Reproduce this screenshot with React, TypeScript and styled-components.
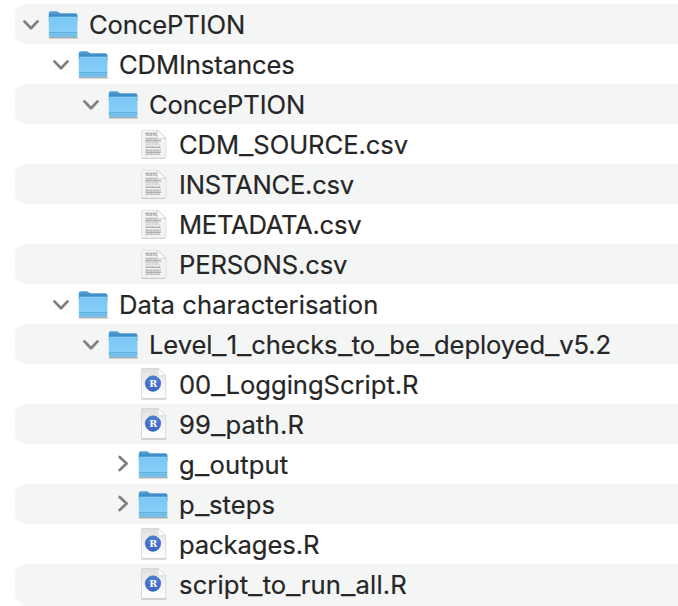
import React, { Fragment } from "react";
import styled, { createGlobalStyle } from "styled-components";

const GlobalStyle = createGlobalStyle`
  * { box-sizing: border-box; }
  html, body { margin: 0; background: #fff; overflow: hidden; }
`;

const Tree = styled.main`
  width: 678px;
  height: 606px;
  padding: 4px 0 0 15px;
  overflow: hidden;
  background: #fff;
  font-family: Inter, "Liberation Sans", sans-serif;
  font-size: 25.6px;
  color: #262626;
  -webkit-text-stroke: 0.2px #262626;
`;

const Row = styled.div<{ $depth: number; $striped: boolean }>`
  display: flex;
  align-items: center;
  height: 40px;
  padding-left: ${(p) => p.$depth * 30}px;
  border-radius: 10px 0 0 10px;
  background: ${(p) => (p.$striped ? "#f4f5f5" : "transparent")};
`;

const Disclosure = styled.span`
  flex: 0 0 30px;
  height: 40px;
  svg { display: block; }
`;

const IconSlot = styled.span`
  flex: 0 0 44px;
  height: 40px;
  -webkit-text-stroke: 0;
  svg { display: block; }
`;

const Label = styled.span<{ $tracking: number }>`
  line-height: 40px;
  padding-top: 1px;
  white-space: pre;
  letter-spacing: ${(p) => p.$tracking}px;
`;

const Underscore = styled.span`
  display: inline-block;
  line-height: 1;
  margin-right: 2.7px;
  transform: scaleX(1.23);
  transform-origin: 0 50%;
`;

const GradientDefs = styled.svg`
  display: block;
  width: 0;
  height: 0;
`;

const Chevron = ({ open }: { open: boolean }) => (
  <svg width="30" height="40" viewBox="0 0 30 40" fill="none" stroke="#808080" strokeWidth="2.8" strokeLinecap="round" strokeLinejoin="round">
    <path d={open ? "M9.4 17.4 L16 24.3 L22.6 17.4" : "M14.7 13 L21.6 19.5 L14.7 26"} />
  </svg>
);

const FolderIcon = () => (
  <svg width="44" height="40" viewBox="0 0 44 40">
    <path d="M4.5 33.6 H32" stroke="#000" strokeOpacity=".3" strokeWidth="1.8" strokeLinecap="round" />
    <path d="M3.8 9.2 Q3.8 7.3 5.7 7.3 H11.4 Q12.6 7.3 13.4 8 L14.6 8.9 Q15.2 9.3 16.2 9.3 H30.6 Q32.4 9.3 32.4 11 V17 H3.8 Z" fill="url(#folderBack)" />
    <path d="M3.8 14.3 Q3.8 12.8 5.3 12.8 H30.9 Q32.4 12.8 32.4 14.3 V31.4 Q32.4 33.1 30.8 33.1 H5.4 Q3.8 33.1 3.8 31.4 Z" fill="url(#folderFront)" />
    <path d="M4.2 28.5 H32" stroke="#5aabdc" strokeWidth=".9" />
    <path d="M4.2 30.3 H32" stroke="#68b6e3" strokeWidth=".7" />
    <path d="M5 13.3 H31.5" stroke="#8fd2f8" strokeWidth=".8" />
  </svg>
);

const TextFileIcon = () => (
  <svg width="44" height="40" viewBox="0 0 44 40">
    <path d="M7.4 34.4 H29.8" stroke="#000" strokeOpacity=".2" strokeWidth="1.4" strokeLinecap="round" />
    <path d="M8.3 6.2 H22.4 L31 14.4 V31.8 Q31 34 28.8 34 H8.7 Q6.5 34 6.5 31.8 V8.2 Q6.5 6.2 8.7 6.2 Z" fill="#f3f3f3" stroke="#dadada" strokeWidth=".7" />
    <g stroke="#a6a6a6" strokeWidth="1.5">
      <path d="M10.5 9.4 H21.5" strokeDasharray="3.8 .5 2.6 .4" />
      <path d="M11 11.2 H22" strokeDasharray="1.8 .5 4 .6" strokeOpacity=".75" />
      <path d="M10.5 14.6 H22.5" strokeDasharray="2.3 .4 4.2 .5" strokeOpacity=".8" />
      <path d="M10.5 16.6 H26" strokeDasharray="4.5 .5 2.6 .4" />
      <path d="M10.5 18.6 H24" strokeDasharray="1.6 .4 3.5 .5" strokeOpacity=".6" />
      <path d="M10.5 20.5 H25.5" strokeDasharray="3.2 .4 2.7 .5" strokeOpacity=".35" />
      <path d="M10.5 23.3 H25.5" strokeDasharray="3 .6 1.8 .5" />
      <path d="M10.5 26.2 H25.8" strokeDasharray="3.7 .4 2.4 .5" strokeOpacity=".75" />
      <path d="M10.5 28.2 H25.8" strokeDasharray="2.2 .5 5 .5" />
      <path d="M10.5 30.2 H25" strokeDasharray="4.1 .5 3.4 .5" strokeOpacity=".75" />
    </g>
    <path d="M22.4 6.2 V12.4 Q22.4 14.4 24.4 14.4 H31 Z" fill="#fff" stroke="#c4c4c4" strokeWidth=".7" />
  </svg>
);

const RFileIcon = () => (
  <svg width="44" height="40" viewBox="0 0 44 40">
    <path d="M7 34.7 H30.4" stroke="#000" strokeOpacity=".28" strokeWidth="1.4" strokeLinecap="round" />
    <path d="M7.2 4.5 H23.2 L30.7 11.3 V34.4 H6.5 V5.2 Q6.5 4.5 7.2 4.5 Z" fill="url(#sheet)" stroke="#cecece" strokeWidth=".7" />
    <path d="M23.2 4.5 V11.3 H30.7 Z" fill="#fff" stroke="#d6d6d6" strokeWidth=".6" />
    <circle cx="18" cy="19.6" r="7.8" fill="url(#badge)" stroke="#3461bd" strokeWidth=".5" />
    <text x="18.2" y="23.2" textAnchor="middle" fill="#fff" fontFamily="DejaVu Serif, Liberation Serif, serif" fontWeight="700" fontSize="9.6">R</text>
  </svg>
);

const Gradients = () => (
  <GradientDefs>
    <defs>
      <linearGradient id="folderBack" x1="0" y1="0" x2="0" y2="1">
        <stop offset="0" stopColor="#57a5d8" />
        <stop offset=".58" stopColor="#3583c2" />
      </linearGradient>
      <linearGradient id="folderFront" x1="0" y1="0" x2="0" y2="1">
        <stop offset="0" stopColor="#7ac7f3" />
        <stop offset=".7" stopColor="#84cef8" />
        <stop offset="1" stopColor="#70bde9" />
      </linearGradient>
      <linearGradient id="sheet" x1="0" y1="0" x2="0" y2="1">
        <stop offset="0" stopColor="#dedede" />
        <stop offset=".55" stopColor="#f3f3f3" />
        <stop offset="1" stopColor="#ffffff" />
      </linearGradient>
      <linearGradient id="badge" x1="0" y1="0" x2="0" y2="1">
        <stop offset="0" stopColor="#527fd5" />
        <stop offset="1" stopColor="#3564c4" />
      </linearGradient>
    </defs>
  </GradientDefs>
);

type Kind = "folder" | "text" | "r";
interface Entry { name: string; depth: number; kind: Kind; open?: boolean; tracking: number }

const entries: Entry[] = [
  { name: "ConcePTION", depth: 0, kind: "folder", open: true, tracking: -0.12 },
  { name: "CDMInstances", depth: 1, kind: "folder", open: true, tracking: -0.09 },
  { name: "ConcePTION", depth: 2, kind: "folder", open: true, tracking: -0.12 },
  { name: "CDM_SOURCE.csv", depth: 3, kind: "text", tracking: -0.08 },
  { name: "INSTANCE.csv", depth: 3, kind: "text", tracking: -0.24 },
  { name: "METADATA.csv", depth: 3, kind: "text", tracking: -0.26 },
  { name: "PERSONS.csv", depth: 3, kind: "text", tracking: -0.13 },
  { name: "Data characterisation", depth: 1, kind: "folder", open: true, tracking: 0.07 },
  { name: "Level_1_checks_to_be_deployed_v5.2", depth: 2, kind: "folder", open: true, tracking: -0.1 },
  { name: "00_LoggingScript.R", depth: 3, kind: "r", tracking: -0.03 },
  { name: "99_path.R", depth: 3, kind: "r", tracking: 0.14 },
  { name: "g_output", depth: 3, kind: "folder", open: false, tracking: 0.16 },
  { name: "p_steps", depth: 3, kind: "folder", open: false, tracking: 0.02 },
  { name: "packages.R", depth: 3, kind: "r", tracking: -0.1 },
  { name: "script_to_run_all.R", depth: 3, kind: "r", tracking: 0.12 },
];

const icons = { folder: FolderIcon, text: TextFileIcon, r: RFileIcon };

const FileName = ({ name }: { name: string }) => (
  <>
    {name.split("_").map((part, i) => (
      <Fragment key={i}>
        {i > 0 && <Underscore>_</Underscore>}
        {part}
      </Fragment>
    ))}
  </>
);

export default function App() {
  return (
    <>
      <GlobalStyle />
      <Tree>
        <Gradients />
        {entries.map((entry, i) => {
          const Icon = icons[entry.kind];
          return (
            <Row key={i} $depth={entry.depth} $striped={i % 2 === 0}>
              <Disclosure>{entry.open !== undefined && <Chevron open={entry.open} />}</Disclosure>
              <IconSlot><Icon /></IconSlot>
              <Label $tracking={entry.tracking}><FileName name={entry.name} /></Label>
            </Row>
          );
        })}
        <Row $depth={0} $striped />
      </Tree>
    </>
  );
}
